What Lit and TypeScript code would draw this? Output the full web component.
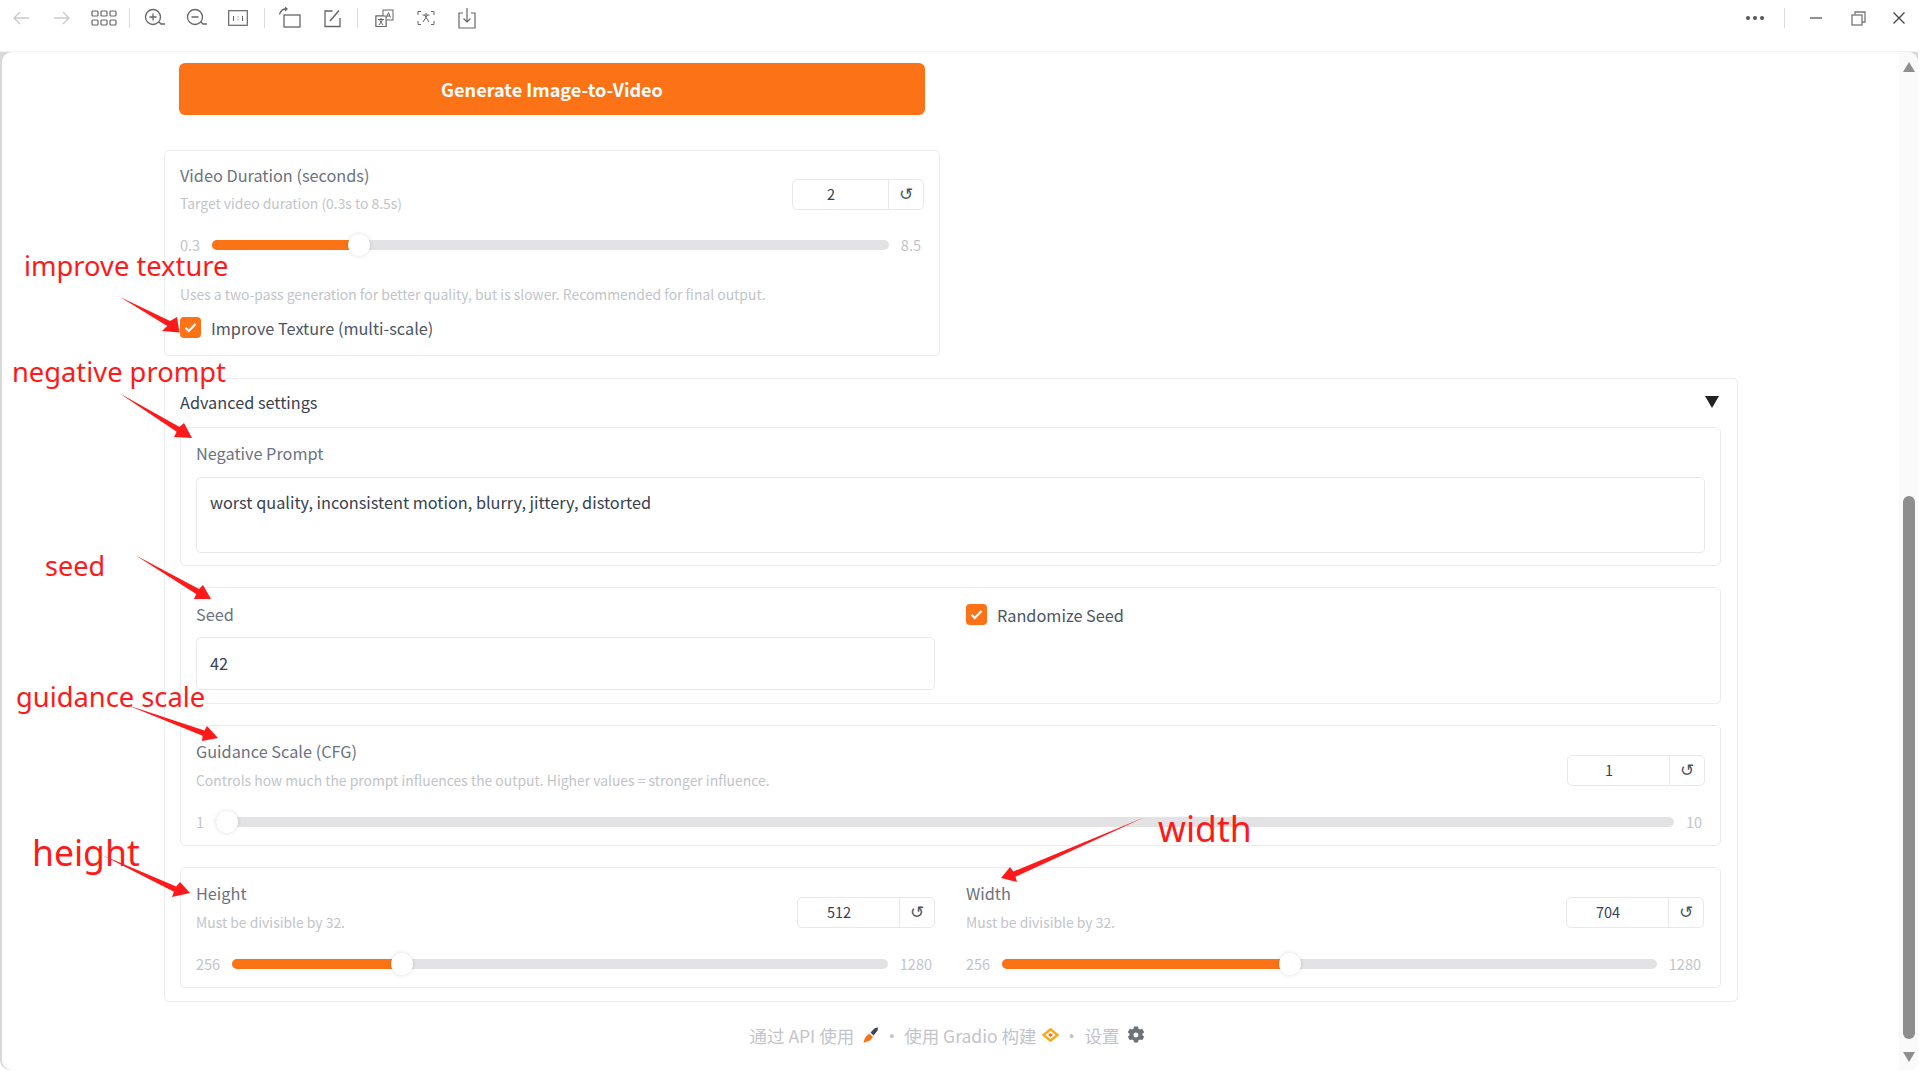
import { LitElement, html, css, svg } from "lit";
import { customElement } from "lit/decorators.js";

const ic = (w: number, h: number, body: unknown) =>
  html`<svg width=${w} height=${h} viewBox="0 0 ${w} ${h}" fill="none" stroke="#666" stroke-width="1.3">${body}</svg>`;

const icons = {
  back: ic(18, 18, svg`<path d="M17 9H2M8 3L2 9l6 6" stroke="#c9c9c9"/>`),
  fwd: ic(18, 18, svg`<path d="M1 9h15M10 3l6 6-6 6" stroke="#c9c9c9"/>`),
  grid: ic(26, 18, svg`<g stroke-width="1.2"><rect x="1" y="2" width="6" height="5" rx="1"/><rect x="10" y="2" width="6" height="5" rx="1"/><rect x="19" y="2" width="6" height="5" rx="1"/><rect x="1" y="11" width="6" height="5" rx="1"/><rect x="10" y="11" width="6" height="5" rx="1"/><rect x="19" y="11" width="6" height="5" rx="1"/></g>`),
  zin: ic(22, 20, svg`<circle cx="9" cy="9" r="7.5"/><path d="M15 14l2 2h4M5.500 9h7M9 5.500v7"/>`),
  zout: ic(22, 20, svg`<circle cx="9" cy="9" r="7.5"/><path d="M15 14l2 2h4M5.500 9h7"/>`),
  one: ic(20, 18, svg`<rect x=".7" y="1.700" width="18.600" height="14.600" stroke-width="1.200"/><path d="M5.500 7v5M14.500 7v5M10 7.500v.8M10 10.500v.8" stroke-width="1"/>`),
  rot: ic(24, 24, svg`<rect x="6" y="9" width="16" height="12" stroke-width="1.300"/><path d="M1.500 8.500C2.500 5 5 3 8 3" /><path d="M7 .5l3 2.500-3 2.500z" fill="#666" stroke="none"/>`),
  edit: ic(20, 20, svg`<g transform="translate(2.500 0)"><path d="M9 3H1.500v15.500h15V10"/><path d="M6.500 13L15.500 2.500" stroke-width="1.500"/></g>`),
  trans: ic(19, 20, svg`<g stroke-width="1"><rect x="1" y="8" width="10" height="10.500" fill="#fff"/><rect x="8" y="2" width="10" height="10" fill="#fff"/><rect x="1" y="8" width="10" height="10.500" fill="#fff"/><path d="M3 11.500h6M6 10v1.500M4 17l3.500-5M8 17l-3.500-5M11.500 9.500l2-5 2 5M12.300 8h2.400"/></g>`),
  scan: ic(18, 20, svg`<g stroke-width="1"><path d="M1 7V3.500h3M14 3.500h3V7M1 13v3.500h3M14 16.500h3V13"/><path d="M5.500 7h7M9 5v2M6 14l4.500-7M12 14L7.500 7"/></g>`),
  save: ic(18, 22, svg`<path d="M5 6H1v15h16V6h-4M9 1v14M5.500 11.500L9 15l3.500-3.500" stroke-width="1.200"/>`),
  dots: ic(20, 6, svg`<g fill="#555" stroke="none"><circle cx="3" cy="3" r="2"/><circle cx="10" cy="3" r="2"/><circle cx="17" cy="3" r="2"/></g>`),
  min: ic(12, 4, svg`<path d="M0 2h12" stroke="#555"/>`),
  res: ic(15, 15, svg`<path d="M4 3.500V1h10v10h-3" stroke="#777"/><rect x="1" y="4" width="10" height="10" stroke="#777" stroke-width="1.300"/>`),
  x: ic(12, 12, svg`<path d="M.5.5l11 11M11.500.5l-11 11" stroke="#444"/>`),
};

const check = html`<span class="box"><svg width="13" height="11" viewBox="0 0 13 11" fill="none"><path d="M1.500 5.800L4.800 9 11.500 2" stroke="#fff" stroke-width="2.200"/></svg></span>`;

const slider = (min: string, max: string, pct: number) => {
  const pos = `calc(11px + (100% - 22px) * ${pct / 100})`;
  return html`
  <div class="srow">
    <span class="sval">${min}</span>
    <div class="track">
      <div class="fill" style="width:${pos}"></div>
      <div class="thumb" style="left:${pos}"></div>
    </div>
    <span class="sval">${max}</span>
  </div>`;
};

const num = (v: string, w: number) => html`
  <div class="num" style="width:${w}px">
    <span class="numv">${v}</span>
    <span class="reset">↺</span>
  </div>`;

const sliderBlock = (label: string, info: string, v: string, w: number, min: string, max: string, pct: number) => html`
  <div class="sb">
    <div class="shead">
      <div>
        <div class="label">${label}</div>
        <div class="info">${info}</div>
      </div>
      ${num(v, w)}
    </div>
    ${slider(min, max, pct)}
  </div>`;

const notes: [string, number, number, number][] = [
  ["improve texture", 24, 250, 27.300],
  ["negative prompt", 12, 356, 27.300],
  ["seed", 45, 550, 27],
  ["guidance scale", 16, 681, 27.300],
  ["height", 32, 831, 35.500],
  ["width", 1158, 807, 35.500],
];

type P = [number, number];
const arrow = (tail: P, tip: P, a: P, b: P) => {
  const mx = (a[0] + b[0]) / 2, my = (a[1] + b[1]) / 2;
  const dx = tail[0] - tip[0], dy = tail[1] - tip[1];
  const l = Math.hypot(dx, dy), ux = dx / l, uy = dy / l;
  const bx = mx + ux * 1, by = my + uy * 1;
  const n = 2.8;
  const pts: P[] = [tail, [bx - uy * n, by + ux * n], a, tip, b, [bx + uy * n, by - ux * n]];
  const side = (a[0] - mx) * -uy + (a[1] - my) * ux;
  if (side < 0) { const t = pts[1]; pts[1] = pts[5]; pts[5] = t; }
  return pts.map((p) => p.join(",")).join(" ");
};

const arrows = [
  arrow([120, 297], [179.500, 332.500], [177, 317], [162, 331]),
  arrow([119, 393], [192, 438], [184, 423], [174, 437]),
  arrow([135, 555], [211, 599], [203, 585], [194, 599]),
  arrow([127, 705], [218, 738], [207, 726], [202, 741]),
  arrow([102, 855], [190, 893], [180, 882], [172, 897]),
  arrow([1145, 817], [1001, 878], [1010, 867], [1017, 882]),
];

@customElement("app-root")
export class AppRoot extends LitElement {
  static styles = css`
    :host { display: block; position: relative; width: 1920px; height: 1080px; overflow: hidden; background: #fff;
      font-family: "Noto Sans CJK SC", "Noto Sans", sans-serif; color: #374151; }
    .toolbar { height: 52px; padding-bottom: 15px; display: flex; align-items: center; box-sizing: border-box; border-bottom: 1px solid #f1f1f1; }
    .tb { width: 41.500px; height: 36px; display: flex; align-items: center; justify-content: center; }
    .tsep { width: 10px; display: flex; justify-content: center; }
    .tsep i { display: block; width: 1px; height: 20px; background: #ddd; }
    .tsep.wide { width: 11.500px; }
    .spacer { flex: 1; }
    .winr { display: flex; align-items: center; margin-right: 15px; }
    .dots { margin-right: 19px; display: flex; }
    .wsep { width: 1px; height: 20px; background: #ddd; margin-right: 25px; }
    .min { margin-right: 29px; display: flex; }
    .res { margin-right: 27px; display: flex; }
    .winx { display: flex; }
    .frame { height: 1018px; background: #d9d9d9; padding-left: 2px; margin-right: 2px; border-radius: 0 0 10px 10px; }
    .page { height: 100%; background: #fff; border-radius: 10px; display: flex; overflow: hidden; }
    .main { flex: 1; padding: 11px 0 0 162px; min-width: 0; }
    .left { width: 776px; display: flex; flex-direction: column; }
    .btn { margin: 0 15px; height: 52px; background: #fb7316; border-radius: 6px; color: #fff; font-weight: 700; font-size: 18.100px; padding-bottom: 1px; box-sizing: border-box;
      display: flex; align-items: center; justify-content: center; }
    .card { margin-top: 35px; height: 206px; box-sizing: border-box; border: 1.500px solid #ececee; border-radius: 5px; padding: 10.500px 15px 0; }
    .label { font-size: 16.300px; line-height: 26px; color: #6b7280; }
    .info { font-size: 13.900px; line-height: 22px; margin-top: 4.500px; color: #c2c4ca; }
    .shead { display: flex; justify-content: space-between; align-items: flex-start; }
    .num { height: 31px; margin-top: 17px; box-sizing: border-box; border: 1.500px solid #e9e9ec; border-radius: 5px; display: flex; color: #374151; }
    .numv { flex: 1; text-align: center; font-size: 14.500px; line-height: 27px; padding-right: 19px; }
    .reset { width: 34px; border-left: 1.500px solid #e9e9ec; font-family: "DejaVu Sans", sans-serif; font-size: 17px; line-height: 28px; text-align: center; color: #4b5563; }
    .srow { display: flex; align-items: center; padding-right: 3px; margin-top: 21px; }
    .sval { font-size: 14.500px; line-height: 20px; color: #c2c4ca; }
    .track { flex: 1; height: 10px; margin: 0 12px; background: #e3e3e6; border-radius: 5px; position: relative; }
    .fill { height: 100%; background: #fb7316; border-radius: 5px; }
    .thumb { position: absolute; top: -6px; width: 22px; height: 22px; margin-left: -11px; border-radius: 50%; background: #fff; box-shadow: 0 0 4px rgba(0,0,0,.14); }
    .info2 { margin-top: 27.500px; font-size: 13.900px; line-height: 22px; color: #c2c4ca; }
    .cbrow { display: flex; align-items: center; gap: 10px; font-size: 16.300px; color: #4b5563; line-height: 22px; }
    .card .cbrow { margin-top: 12px; }
    .box { width: 21px; height: 21px; border-radius: 4px; background: #fb7316; display: flex; align-items: center; justify-content: center; flex: none; }
    .acc { margin-top: 22px; width: 1574px; height: 624px; box-sizing: border-box; border: 1.500px solid #ececee; border-radius: 5px; padding: 0 16px 0 15px; }
    .acch { height: 48px; padding-bottom: 2px; box-sizing: border-box; display: flex; align-items: center; justify-content: space-between; font-size: 16.300px; color: #374151; }
    .tri { width: 0; height: 0; border-left: 7px solid transparent; border-right: 7px solid transparent; border-top: 12px solid #222; margin-right: 2px; }
    .blk { border: 1.500px solid #ececee; border-radius: 5px; padding: 12px 15px 0; box-sizing: border-box; margin-bottom: 21px; }
    .neg { height: 139px; padding-top: 11.500px; }
    .ta { margin-top: 11.500px; height: 76px; box-sizing: border-box; border: 1.500px solid #e9e9ec; border-radius: 5px; padding: 12px 13px; font-size: 16.300px; line-height: 24px; color: #374151; }
    .seed { height: 117px; padding-top: 12.500px; display: grid; grid-template-columns: 739px 738px; column-gap: 31px; }
    .seedin { margin-top: 10.500px; height: 53px; box-sizing: border-box; border: 1.500px solid #e9e9ec; border-radius: 5px; padding: 0 13px; font-size: 16.300px; line-height: 50px; }
    .seedc { padding-top: 3px; }
    .guid { height: 121px; }
    .hw { height: 121px; display: grid; grid-template-columns: 739px 738px; column-gap: 31px; }
    .footer { height: 24px; margin-top: 21px; display: flex; align-items: center; width: 1574px; justify-content: center; box-sizing: border-box; padding-right: 8px; font-size: 17.500px; color: #c2c4ca; }
    .fdot { width: 25px; text-align: center; flex: none; }
    .fdot.b { width: 26px; }
    .f1 { margin-left: 9px; }
    .f2 { margin-left: 5px; }
    .f3 { margin-left: 7px; }
    .scroll { width: 19px; background: #fafafa; display: flex; flex-direction: column; align-items: center; flex: none; }
    .sup { margin-top: 10px; width: 0; height: 0; border-left: 6.500px solid transparent; border-right: 6.500px solid transparent; border-bottom: 10px solid #8e8e8e; }
    .thumbv { margin-top: 424px; width: 12px; height: 543px; border-radius: 6px; background: #8e8e8e; }
    .sdn { margin-top: 13px; width: 0; height: 0; border-left: 6.500px solid transparent; border-right: 6.500px solid transparent; border-top: 10px solid #8e8e8e; }
    .overlay { position: absolute; inset: 0; pointer-events: none; }
    .note { position: absolute; font-family: "Noto Sans", sans-serif; color: #fe1a1a; line-height: 1.2; white-space: nowrap; }
  `;

  render() {
    return html`
      <div class="toolbar">
        <span class="tb">${icons.back}</span><span class="tb">${icons.fwd}</span><span class="tb">${icons.grid}</span>
        <span class="tsep"><i></i></span>
        <span class="tb">${icons.zin}</span><span class="tb">${icons.zout}</span><span class="tb">${icons.one}</span>
        <span class="tsep"><i></i></span>
        <span class="tb">${icons.rot}</span><span class="tb">${icons.edit}</span>
        <span class="tsep wide"><i></i></span>
        <span class="tb">${icons.trans}</span><span class="tb">${icons.scan}</span><span class="tb">${icons.save}</span>
        <span class="spacer"></span>
        <div class="winr">
          <span class="dots">${icons.dots}</span><span class="wsep"></span>
          <span class="min">${icons.min}</span><span class="res">${icons.res}</span><span class="winx">${icons.x}</span>
        </div>
      </div>
      <div class="frame">
        <div class="page">
          <div class="main">
            <div class="left">
              <div class="btn">Generate Image-to-Video</div>
              <div class="card">
                ${sliderBlock("Video Duration (seconds)", "Target video duration (0.3s to 8.5s)", "2", 132, "0.3", "8.5", 20.700)}
                <div class="info2">Uses a two-pass generation for better quality, but is slower. Recommended for final output.</div>
                <div class="cbrow">${check}<span>Improve Texture (multi-scale)</span></div>
              </div>
            </div>
            <div class="acc">
              <div class="acch"><span>Advanced settings</span><span class="tri"></span></div>
              <div class="blk neg">
                <div class="label">Negative Prompt</div>
                <div class="ta">worst quality, inconsistent motion, blurry, jittery, distorted</div>
              </div>
              <div class="blk seed">
                <div><div class="label">Seed</div><div class="seedin">42</div></div>
                <div class="seedc"><div class="cbrow">${check}<span>Randomize Seed</span></div></div>
              </div>
              <div class="blk guid">
                ${sliderBlock("Guidance Scale (CFG)", "Controls how much the prompt influences the output. Higher values = stronger influence.", "1", 138, "1", "10", 0)}
              </div>
              <div class="blk hw">
                ${sliderBlock("Height", "Must be divisible by 32.", "512", 138, "256", "1280", 25)}
                ${sliderBlock("Width", "Must be divisible by 32.", "704", 138, "256", "1280", 43.750)}
              </div>
            </div>
            <div class="footer">
              <span>通过 API 使用</span>
              <svg class="f1" width="16" height="16" viewBox="0 0 16 16"><path d="M6.500 6.500l3.500 3.500-3 3.500-3 1-3.500 1.500 1-4 1.500-2.500z" fill="#f97316"/><path d="M7.500 5.500L10.500 2.500l1.500-1.500 3-.5-.5 3-1.500 2-2.500 3z" fill="#3b4256"/></svg>
              <span class="fdot">·</span>
              <span>使用 Gradio 构建</span>
              <svg class="f2" width="17" height="14" viewBox="0 0 17 14" fill="none"><path d="M8.500 1.300L15.500 7l-7 5.700L1.500 7z" stroke="#f9a81a" stroke-width="2.400"/><path d="M8.500 5L11 7 8.500 9 6 7z" fill="#f97316"/></svg>
              <span class="fdot b">·</span>
              <span>设置</span>
              <svg class="f3" width="18" height="18" viewBox="0 0 18 18"><path fill="#6f7275" fill-rule="evenodd" d="M7 .5h4l.5 2.300 1.500.8 2.200-.8 2 3.400-1.700 1.600v1.400l1.700 1.600-2 3.400-2.200-.8-1.500.8-.5 2.300H7l-.5-2.300-1.500-.8-2.200.8-2-3.400 1.700-1.600V7.800L.8 6.200l2-3.400 2.200.8 1.500-.8zM9 6.500a2.500 2.500 0 100 5 2.500 2.500 0 000-5z"/></svg>
            </div>
          </div>
          <div class="scroll"><span class="sup"></span><span class="thumbv"></span><span class="sdn"></span></div>
        </div>
      </div>
      <div class="overlay">
        <svg width="1920" height="1080">${arrows.map((p) => svg`<polygon points=${p} fill="#fe1a1a"/>`)}</svg>
        ${notes.map(([t, x, y, s]) => html`<span class="note" style="left:${x}px;top:${y}px;font-size:${s}px">${t}</span>`)}
      </div>
    `;
  }
}
